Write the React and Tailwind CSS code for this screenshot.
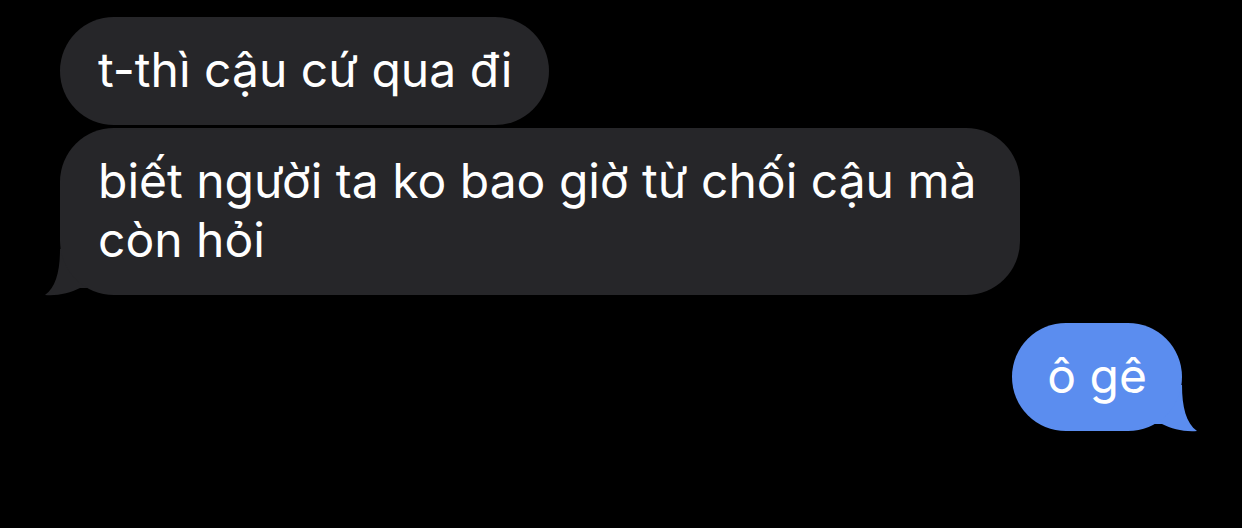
const FONT = { fontFamily: 'Inter, "Noto Sans", sans-serif' };

function Tail({ color, side }) {
  // curved iMessage tail hanging off the bubble's bottom corner
  const pos = side === 'left' ? 'left-[-16px]' : 'right-[-16px] -scale-x-100';
  return (
    <svg
      className={`absolute bottom-0 ${pos}`}
      width="60"
      height="50"
      viewBox="0 0 60 50"
      overflow="visible"
    >
      <path d="M16 4 C16 26 12 42 1 50 C14 51 26 48 36 43 L56 43 L56 4 Z" fill={color} />
    </svg>
  );
}

function Bubble({ children, mine, tail, className = '' }) {
  const bg = mine ? 'bg-[#5b8def]' : 'bg-[#262629]';
  const color = mine ? '#5b8def' : '#262629';
  const px = mine ? 'px-[35px]' : 'pl-[38px] pr-[37px]';
  return (
    <div className={`relative ${className}`}>
      {tail && <Tail color={color} side={mine ? 'right' : 'left'} />}
      <div
        className={`relative ${bg} ${px} rounded-[54px] pt-[23px] pb-[26px] text-white text-[48px] leading-[59px]`}
      >
        {children}
      </div>
    </div>
  );
}

export default function App() {
  return (
    <div className="w-full h-[528px] bg-black overflow-hidden px-[60px] pt-[17px]" style={FONT}>
      <div className="flex flex-col items-start gap-[3px]">
        <Bubble>t-thì cậu cứ qua đi</Bubble>
        <Bubble tail className="w-[960px]">
          biết người ta ko bao giờ từ chối cậu mà
          <br />
          còn hỏi
        </Bubble>
      </div>
      <div className="flex justify-end mt-[28px]">
        <Bubble mine tail>
          ô gê
        </Bubble>
      </div>
    </div>
  );
}
